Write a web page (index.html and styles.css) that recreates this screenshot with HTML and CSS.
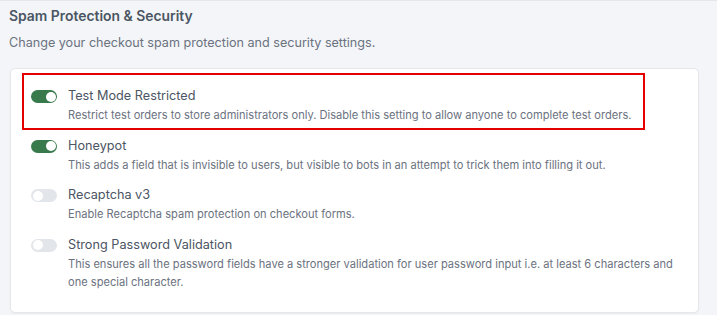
FILE: index.html
```html
<!DOCTYPE html>
<html lang="en">
<head>
<meta charset="utf-8">
<title>Spam Protection &amp; Security</title>
<link rel="stylesheet" href="styles.css">
</head>
<body>
<main class="page">
  <header class="section-head">
    <h2 class="section-title">Spam Protection &amp; Security</h2>
    <p class="section-sub">Change your checkout spam protection and security settings.</p>
  </header>
  <section class="card">
    <div class="highlight"></div>
    <div class="setting">
      <span class="toggle on"><span class="knob"></span></span>
      <div class="setting-text">
        <div class="setting-title">Test Mode Restricted</div>
        <div class="setting-desc">Restrict test orders to store administrators only. Disable this setting to allow anyone to complete test orders.</div>
      </div>
    </div>
    <div class="setting">
      <span class="toggle on"><span class="knob"></span></span>
      <div class="setting-text">
        <div class="setting-title">Honeypot</div>
        <div class="setting-desc">This adds a field that is invisible to users, but visible to bots in an attempt to trick them into filling it out.</div>
      </div>
    </div>
    <div class="setting">
      <span class="toggle"><span class="knob"></span></span>
      <div class="setting-text">
        <div class="setting-title">Recaptcha v3</div>
        <div class="setting-desc">Enable Recaptcha spam protection on checkout forms.</div>
      </div>
    </div>
    <div class="setting">
      <span class="toggle"><span class="knob"></span></span>
      <div class="setting-text">
        <div class="setting-title">Strong Password Validation</div>
        <div class="setting-desc">This ensures all the password fields have a stronger validation for user password input i.e. at least 6 characters and one special character.</div>
      </div>
    </div>
  </section>
</main>
</body>
</html>
```
FILE: styles.css
```css
* { box-sizing: border-box; }
html, body { margin: 0; padding: 0; }
body {
  background: #f3f5f8;
  font-family: Inter, "Noto Sans", sans-serif;
  color: #374151;
  width: 717px;
  height: 315px;
  overflow: hidden;
}
.page {
  border-top: 1px solid #e5e7eb;
  padding: 0 18px 0 10px;
}
.section-head { padding-top: 6px; margin-left: -1px; }
.section-title {
  margin: 0;
  font-size: 13.9px;
  line-height: 18px;
  font-weight: 600;
  color: #4b5563;
}
.section-sub {
  margin: 9px 0 0;
  font-size: 12.6px;
  line-height: 18px;
  color: #6b7280;
}
.card {
  position: relative;
  margin-top: 16px;
  background: #fff;
  border: 1px solid #e5e7eb;
  border-radius: 5px;
  box-shadow: 0 1px 2px rgba(0,0,0,0.04);
  padding: 17px 20px 21px 20px;
  display: flex;
  flex-direction: column;
  gap: 11.5px;
}
.highlight {
  position: absolute;
  left: 11px;
  top: 4px;
  width: 623px;
  height: 57px;
  border: 2px solid #e50000;
  pointer-events: none;
}
.setting {
  display: flex;
  gap: 11px;
  align-items: flex-start;
}
.toggle {
  flex: none;
  position: relative;
  width: 26px;
  height: 13px;
  margin-top: 4px;
  border-radius: 7px;
  background: #e2e5ea;
}
.toggle.on { background: #397a4c; }
.knob {
  position: absolute;
  top: 1.5px;
  left: 1.5px;
  width: 10px;
  height: 10px;
  border-radius: 50%;
  background: #fff;
}
.toggle.on .knob { left: 14.5px; }
.setting-text { display: flex; flex-direction: column; }
.setting-title {
  font-size: 12.7px;
  line-height: 20px;
  color: #4b5563;
}
.setting-desc {
  font-size: 11.1px;
  line-height: 18px;
  color: #6b7280;
}
```
